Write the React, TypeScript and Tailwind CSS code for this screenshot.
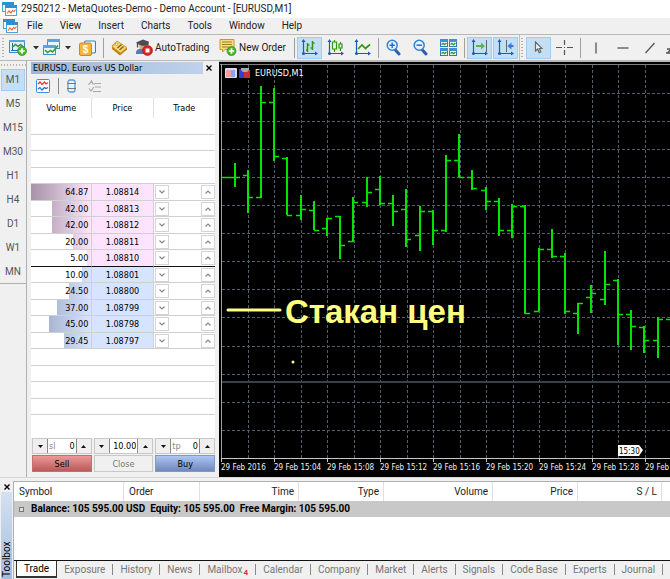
import { useState } from "react"
import type { ReactNode } from "react"

interface BookRow {
  volume: number
  price: string
  side: "ask" | "bid"
}

const book: BookRow[] = [
  { volume: 64.87, price: "1.08814", side: "ask" },
  { volume: 42, price: "1.08813", side: "ask" },
  { volume: 42, price: "1.08812", side: "ask" },
  { volume: 20, price: "1.08811", side: "ask" },
  { volume: 5, price: "1.08810", side: "ask" },
  { volume: 10, price: "1.08801", side: "bid" },
  { volume: 24.5, price: "1.08800", side: "bid" },
  { volume: 37, price: "1.08799", side: "bid" },
  { volume: 45, price: "1.08798", side: "bid" },
  { volume: 29.45, price: "1.08797", side: "bid" },
]
const maxVolume = 64.87

// open, high, low, close as pixel rows of the chart
const bars = [
  [116, 102, 126, 116],
  [114, 109, 152, 136],
  [136, 25, 137, 41],
  [41, 27, 100, 95],
  [97, 96, 154, 154],
  [154, 134, 159, 148],
  [149, 140, 169, 169],
  [167, 157, 175, 157],
  [155, 155, 198, 184],
  [180, 136, 181, 141],
  [141, 116, 146, 131],
  [128, 115, 144, 142],
  [142, 134, 165, 150],
  [148, 128, 186, 178],
  [174, 145, 190, 150],
  [150, 149, 184, 169],
  [169, 94, 171, 99],
  [99, 73, 116, 116],
  [116, 109, 129, 127],
  [129, 126, 149, 140],
  [140, 137, 175, 169],
  [169, 143, 177, 145],
  [145, 144, 253, 252],
  [250, 187, 250, 188],
  [188, 168, 197, 195],
  [195, 192, 253, 250],
  [252, 242, 273, 242],
  [236, 224, 252, 232],
  [238, 190, 244, 223],
  [219, 218, 284, 253],
  [253, 249, 289, 265],
  [266, 265, 292, 279],
  [279, 256, 297, 258],
  [258, 250, 270, 260],
]

const menus = ["File", "View", "Insert", "Charts", "Tools", "Window", "Help"]
const frames = ["M1", "M5", "M15", "M30", "H1", "H4", "D1", "W1", "MN"]
const tabs = [
  "Trade", "Exposure", "History", "News", "Mailbox", "Calendar", "Company",
  "Market", "Alerts", "Signals", "Code Base", "Experts", "Journal",
]
const timeLabels = ["29 Feb 2016", "29 Feb 15:04", "29 Feb 15:08", "29 Feb 15:12", "29 Feb 15:16", "29 Feb 15:20", "29 Feb 15:24", "29 Feb 15:28", "29 Feb 15:32"]

function AppIcon() {
  return (
    <svg width="15" height="14" viewBox="0 0 15 14" aria-hidden="true">
      <rect x="0.5" y="0.5" width="11" height="9" fill="#fff" stroke="#4ba3d8" />
      <rect x="0" y="0" width="12" height="3" fill="#2f8fcf" />
      <rect x="3.5" y="3.5" width="11" height="10" fill="#fff" stroke="#4ba3d8" />
      <rect x="3" y="3" width="12" height="3" fill="#2f8fcf" />
      <path d="M5 11.5l2-2.5 2 2 1.500-2.500 1.500 1 1.500-2" fill="none" stroke="#f26a3c" strokeWidth="1.200" />
    </svg>
  )
}

function NewChartIcon() {
  return (
    <svg width="18" height="17" viewBox="0 0 18 17">
      <rect x="0.500" y="1.500" width="15" height="12" fill="#dff0fb" stroke="#3f8dc6" />
      <path d="M0 1h16v2H0z" fill="#5aa5dc" />
      <path d="M3.500 4v8M2 11.500h12" stroke="#2c62b5" fill="none" />
      <path d="M3.500 8l3-2.500 2.500 2 2.500-2 3 2.500" stroke="#2e9a2e" strokeWidth="1.500" fill="none" />
      <circle cx="13" cy="12" r="4.500" fill="#4cb52c" stroke="#2f8a1c" strokeWidth="0.700" />
      <path d="M13 9.300v5.400M10.300 12h5.400" stroke="#fff" strokeWidth="1.700" />
    </svg>
  )
}

function ProfilesIcon() {
  return (
    <svg width="18" height="17" viewBox="0 0 18 17">
      <rect x="4.500" y="0.500" width="12" height="9" fill="#eaf5fc" stroke="#3f8dc6" />
      <path d="M4 0h13v3H4z" fill="#5aa5dc" />
      <rect x="0.500" y="6.500" width="12" height="9" fill="#eaf5fc" stroke="#3f8dc6" />
      <path d="M0 6h13v3H0z" fill="#5aa5dc" />
      <path d="M2 11l2.500 2.500 3-2 2 1.500 5.500-6.500" fill="none" stroke="#2e9a2e" strokeWidth="1.500" />
    </svg>
  )
}

function SymbolsIcon() {
  return (
    <svg width="17" height="16" viewBox="0 0 17 16">
      <rect x="5.500" y="1" width="11" height="12" rx="1.500" fill="#f4f9fe" stroke="#3b82c8" strokeWidth="1.200" />
      <rect x="0.500" y="3" width="12" height="12.500" rx="1.500" fill="#f2b632" stroke="#c98b12" />
      <text x="6.500" y="13" textAnchor="middle" fontSize="10" className="font-['Liberation_Sans'] font-bold" fill="#fff">$</text>
    </svg>
  )
}

function TagIcon() {
  return (
    <svg width="17" height="16" viewBox="0 0 17 16">
      <path d="M1 5.500L6 1l10 6.500v2L9 15.500 1 9z" fill="#b9820f" />
      <path d="M1 6.500L6 1l10 6.500L9.500 13z" fill="#f6d878" stroke="#c8962a" strokeWidth="0.700" />
      <path d="M6.500 8l4-3.500M8.500 10l4-3.500" stroke="#8a5f10" strokeWidth="1.300" />
      <circle cx="5.500" cy="4.300" r="1.200" fill="#fff" stroke="#a87410" strokeWidth="0.600" />
    </svg>
  )
}

function AutoIcon() {
  return (
    <svg width="18" height="17" viewBox="0 0 18 17">
      <path d="M1 14c0-3.500 3-4.500 6-4.500s5 1.500 5 5.500H1z" fill="#4c7fc0" />
      <circle cx="7.500" cy="7" r="3.200" fill="#d8a878" />
      <path d="M1 3.500L8 .5l6 2.300-.5 3.200L8 7 3.500 5.500z" fill="#4a4f56" />
      <path d="M2.500 4v4.500" stroke="#4a4f56" strokeWidth="1.300" />
      <circle cx="12.500" cy="11.500" r="5" fill="#d9261c" stroke="#a3120c" strokeWidth="0.600" />
      <rect x="10.500" y="9.500" width="4" height="4" fill="#fff" />
    </svg>
  )
}

function NewOrderIcon() {
  return (
    <svg width="18" height="17" viewBox="0 0 18 17">
      <path d="M1 .5h14v10H6L3.500 13v-2.500H1z" fill="#f6dc80" stroke="#c79a28" />
      <path d="M3 3h10M3 5.500h10M3 8h7" stroke="#a57d1c" />
      <circle cx="12.500" cy="12" r="4.500" fill="#4cb52c" stroke="#2f8a1c" strokeWidth="0.700" />
      <path d="M12.500 9.300v5.400M9.800 12h5.400" stroke="#fff" strokeWidth="1.700" />
    </svg>
  )
}

// blue axes that the chart-mode icons share
function Axes({ children }: { children: ReactNode }) {
  return (
    <svg width="17" height="17" viewBox="0 0 17 17">
      <path d="M2.500 2v12.500M1 14.500h14" stroke="#2458b8" strokeWidth="1.200" fill="none" />
      <path d="M2.500 0L4.500 3h-4zM17 14.500l-3-2v4z" fill="#2458b8" />
      <circle cx="2.500" cy="14.500" r="1.500" fill="#2458b8" />
      {children}
    </svg>
  )
}

function ZoomIcon({ plus }: { plus?: boolean }) {
  return (
    <svg width="15" height="17" viewBox="0 0 15 17">
      <path d="M8.500 10l4.500 5" stroke="#2d5fae" strokeWidth="3" strokeLinecap="round" />
      <circle cx="6.200" cy="6.200" r="5" fill="#e3f2fd" stroke="#2f86d0" strokeWidth="1.500" />
      <path d={plus ? "M6.200 3.500v5.400M3.500 6.200h5.400" : "M3.500 6.200h5.400"} stroke="#2f6fc0" strokeWidth="1.500" />
    </svg>
  )
}

function TileIcon() {
  return (
    <svg width="17" height="17" viewBox="0 0 17 17">
      {[[0, 0], [9, 0], [0, 9], [9, 9]].map(([x, y]) => (
        <g key={`${x}-${y}`}>
          <rect x={x + 0.5} y={y + 0.5} width="7" height="7" fill="#fff" stroke="#2f78c0" />
          <path d={`M${x} ${y + 1.5}h8`} stroke="#3f8fd8" strokeWidth="3" />
          <path d={`M${x + 1.5} ${y + 5.5}l1.500-1 1.500 1 2-1.500`} stroke="#2e9a2e" strokeWidth="1.500" fill="none" />
        </g>
      ))}
    </svg>
  )
}

function Tool({ label, width, active, children }: { label: string; width: string; active?: boolean; children: ReactNode }) {
  return (
    <button
      aria-label={label}
      className={`flex h-[22px] shrink-0 items-center justify-center ${width} ${
        active ? "border border-[#a3cdf0] bg-[#c3dff5]" : ""
      }`}
    >
      {children}
    </button>
  )
}

function Sep() {
  return <div className="mx-[2px] h-5 w-px shrink-0 bg-[#a0a0a0]" />
}

function Caret({ label }: { label: string }) {
  return (
    <Tool label={label} width="w-[10px]">
      <svg width="6" height="4" viewBox="0 0 6 4"><path d="M0 0h6L3 3.500z" fill="#333" /></svg>
    </Tool>
  )
}

function Grip() {
  return (
    <svg width="4" height="22" className="shrink-0">
      <path d="M2 1v21" stroke="#b4b4b4" strokeWidth="2" strokeDasharray="1 2" />
    </svg>
  )
}

function Toolbar() {
  return (
    <div className="flex h-[27px] items-center overflow-hidden border-y border-[#b8b8b8] bg-[#f0f0f0] pl-[1px]">
      <Grip />
      <Tool label="New chart" width="w-[26px]"><NewChartIcon /></Tool>
      <Caret label="Chart list" />
      <Tool label="Profiles" width="w-[22px]"><ProfilesIcon /></Tool>
      <Caret label="Profile list" />
      <Tool label="Symbols" width="w-[28px]"><SymbolsIcon /></Tool>
      <Sep />
      <Tool label="Market" width="w-[26px]"><TagIcon /></Tool>
      <button className="flex w-[84px] shrink-0 items-center gap-[2px] pl-[3px] whitespace-nowrap"><AutoIcon />AutoTrading</button>
      <button className="flex w-[76px] shrink-0 items-center gap-[2px] pl-[3px] whitespace-nowrap"><NewOrderIcon />New Order</button>
      <Sep />
      <Tool label="Bar chart" width="w-[25px]" active>
        <Axes><path d="M6.500 4v9M5 11h1.500M6.500 6h2M11.500 2v9M9.500 9h2M11.500 4h2" stroke="#2e9a10" strokeWidth="1.500" fill="none" /></Axes>
      </Tool>
      <Tool label="Candlesticks" width="w-[26px]">
        <Axes><path d="M7.500 1v2M7.500 10v3M5.500 3h4v7h-4zM13.500 3v2M13.500 9v3M12 5h3v4h-3z" stroke="#2e9a10" strokeWidth="1.200" fill="none" /></Axes>
      </Tool>
      <Tool label="Line chart" width="w-[28px]">
        <Axes><path d="M4 10l4-4 3.500 3.500L16 5.500" stroke="#2e9a10" strokeWidth="1.700" fill="none" /></Axes>
      </Tool>
      <Sep />
      <Tool label="Zoom in" width="w-[25px]"><ZoomIcon plus /></Tool>
      <Tool label="Zoom out" width="w-[28px]"><ZoomIcon /></Tool>
      <Tool label="Tile windows" width="w-[28px]"><TileIcon /></Tool>
      <Sep />
      <Tool label="Auto scroll" width="w-[25px]" active>
        <Axes><path d="M15.500 1v12" stroke="#666" /><path d="M5 6h5V3.500L14 7l-4 3.500V8H5z" fill="#5cb548" /></Axes>
      </Tool>
      <div className="w-px shrink-0" />
      <Tool label="Chart shift" width="w-[25px]" active>
        <Axes><path d="M9.500 1v12" stroke="#666" /><path d="M16.500 6h-2V3.500L10.500 7l4 3.500V8h2z" fill="#3f78d0" /></Axes>
      </Tool>
      <div className="ml-px h-full w-px shrink-0 bg-[#c0c0c0]" />
      <Grip />
      <div className="w-[2px] shrink-0" />
      <Tool label="Cursor" width="w-[25px]" active>
        <svg width="9" height="13" viewBox="0 0 9 13"><path d="M1.500 1v9l2.200-2 1.500 3.700 1.600-.7-1.500-3.500h2.700z" fill="#f4f4f4" stroke="#666" strokeWidth="1.200" /></svg>
      </Tool>
      <Tool label="Crosshair" width="w-[27px]">
        <svg width="17" height="17" viewBox="0 0 17 17"><path d="M8.500 1v5M8.500 11v5M0 8.500h6M11 8.500h6M8 8.500h1" stroke="#555" strokeWidth="1.200" /></svg>
      </Tool>
      <Sep />
      <Tool label="Vertical line" width="w-[26px]">
        <svg width="12" height="12" viewBox="0 0 12 12"><path d="M6 .5v11" stroke="#555" strokeWidth="1.300" /></svg>
      </Tool>
      <Tool label="Horizontal line" width="w-[27px]">
        <svg width="12" height="12" viewBox="0 0 12 12"><path d="M.5 6h11" stroke="#555" strokeWidth="1.300" /></svg>
      </Tool>
      <Tool label="Trend line" width="w-[27px]">
        <svg width="12" height="12" viewBox="0 0 12 12"><path d="M1.500 11l9-10" stroke="#555" strokeWidth="1.300" /></svg>
      </Tool>
      <Tool label="Channel" width="w-[20px]">
        <svg width="14" height="12" viewBox="0 0 14 12"><path d="M0 11h4M1 7h4M1.500 11l9-10" stroke="#555" strokeWidth="1.300" /></svg>
      </Tool>
    </div>
  )
}

function Timeframes() {
  const [frame, setFrame] = useState("M1")
  return (
    <div className="w-[27px] shrink-0 border-r border-[#b0b0b0]">
      <div className="flex flex-col gap-[2px] border-b border-[#b0b0b0] px-px pt-[2px]">
        <svg width="25" height="4" className="shrink-0"><path d="M0 2h25" stroke="#b4b4b4" strokeWidth="2" strokeDasharray="1 2" /></svg>
        {frames.map((f) => (
          <button
            key={f}
            onClick={() => setFrame(f)}
            className={`h-[22px] text-[#555] ${f === frame ? "border border-[#a3cdf0] bg-[#c3dff5]" : ""}`}
          >
            {f}
          </button>
        ))}
      </div>
    </div>
  )
}

function Chevron({ up }: { up?: boolean }) {
  return (
    <button aria-label={up ? "Sell at this price" : "Buy at this price"} className="flex h-[14px] w-[14px] items-center justify-center border border-[#d4d4d4] bg-white">
      <svg width="6" height="4" viewBox="0 0 6 4"><path d={up ? "M.5 3.500L3 1l2.500 2.500" : "M.5.5L3 3 5.500.5"} fill="none" stroke="#888" strokeWidth="1.200" /></svg>
    </button>
  )
}

function BlankRow() {
  return (
    <tr className="odd:h-[17px] even:h-[16px]">
      <td colSpan={3} className="border-b border-[#d0d0d0] p-0" />
    </tr>
  )
}

function Spinner({ label, value, showLabel }: { label: string; value: string; showLabel?: boolean }) {
  return (
    <div className="flex h-4 min-w-0 flex-1 border border-[#c8c8c8] bg-[#efefef]">
      <button aria-label={`Decrease ${label}`} className="flex w-[14px] items-center justify-center">
        <svg width="5" height="3" viewBox="0 0 5 3"><path d="M0 0h5L2.500 3z" fill="#111" /></svg>
      </button>
      <label className="flex min-w-0 flex-1 items-center border-x border-[#888] bg-white px-px">
        {showLabel && <span className="text-[#888]">{label}</span>}
        <input aria-label={label} defaultValue={value} className="w-full min-w-0 bg-transparent text-right outline-none" />
      </label>
      <button aria-label={`Increase ${label}`} className="flex w-[14px] items-center justify-center">
        <svg width="5" height="3" viewBox="0 0 5 3"><path d="M0 3h5L2.500 0z" fill="#111" /></svg>
      </button>
    </div>
  )
}

function DepthOfMarket() {
  return (
    <section className="flex w-[192px] shrink-0 flex-col pr-[4px] pb-[5px] pl-[4px] font-['DejaVu_Sans_Condensed','DejaVu_Sans',sans-serif] text-[9px] leading-3 text-black">
      <header className="flex h-[13px] items-center">
        <h2 className="flex-1 bg-linear-to-r from-[#9db5d6] to-[#bfd2ea] pl-[2px] whitespace-nowrap">EURUSD, Euro vs US Dollar</h2>
        <button aria-label="Close panel" className="flex w-[12px] justify-center">
          <svg width="6" height="6" viewBox="0 0 6 6"><path d="M.5.5l5 5M5.500.5l-5 5" stroke="#000" strokeWidth="1.400" /></svg>
        </button>
      </header>
      <div className="flex h-6 items-center gap-2 pl-[5px]">
        <button aria-label="Tick chart">
          <svg width="14" height="14" viewBox="0 0 14 14">
            <rect x="0.500" y="0.500" width="13" height="13" rx="1" fill="#fff" stroke="#3b8ede" />
            <path d="M2 5l2-2 2 2.500 2.500-2.500L10 5l2-1.500" fill="none" stroke="#e03030" strokeWidth="1.200" />
            <path d="M2 10l2-1.500L6 11l2.500-2.500 1.500 1 2-1" fill="none" stroke="#2f60c8" strokeWidth="1.200" />
          </svg>
        </button>
        <div className="h-4 w-px bg-[#888]" />
        <button aria-label="Spread">
          <svg width="9" height="14" viewBox="0 0 9 14">
            <rect x="1" y="1" width="7" height="12" rx="2" fill="#e8f3fc" stroke="#5b9bd8" strokeWidth="1.300" />
            <path d="M0 4.500h9M0 9.500h9" stroke="#777" />
          </svg>
        </button>
        <button aria-label="Advanced mode" className="ml-1">
          <svg width="14" height="14" viewBox="0 0 14 14">
            <path d="M0 5h1.500L3.500 2l1.500 3h2M1 9.500l2 2.500 3-4M7 4.500h6M7 8h6M5 12.500h8" fill="none" stroke="#a8a8a8" strokeWidth="1.200" />
          </svg>
        </button>
      </div>
      <div className="flex flex-1 flex-col bg-white">
        <table className="w-full table-fixed border-separate border-spacing-0">
          <thead>
            <tr className="h-5">
              <th className="border-r border-[#e0e0e0] p-0 font-normal">Volume</th>
              <th className="border-r border-[#e0e0e0] p-0 font-normal">Price</th>
              <th className="p-0 font-normal">Trade</th>
            </tr>
          </thead>
          <tbody>
            <BlankRow />
            <BlankRow />
            <BlankRow />
            <BlankRow />
            {book.map((row, i) => {
              const ask = row.side === "ask"
              const line = ask && book[i + 1].side === "bid" ? "border-b-[#111]" : "border-b-[#d0d0d0]"
              return (
                <tr key={row.price} className="odd:h-[17px] even:h-[16px]">
                  <td className={`relative border-r border-b border-r-[#d0d0d0] p-0 pr-[3px] text-right ${line}`}>
                    <div
                      className={`absolute inset-y-0 right-0 bg-[length:60px_100%] bg-right bg-no-repeat ${
                        ask ? "bg-linear-to-r from-[#a693a6] to-[#fde6fd]" : "bg-linear-to-r from-[#93a2bd] to-[#d8e5ff]"
                      }`}
                      style={{ width: `${(row.volume / maxVolume) * 100}%` }}
                    />
                    <span className="relative">{row.volume.toFixed(2)}</span>
                  </td>
                  <td className={`border-r border-b border-r-[#d0d0d0] p-0 text-center ${line} ${ask ? "bg-[#fde3fd]" : "bg-[#d6e4ff]"}`}>
                    {row.price}
                  </td>
                  <td className={`border-b p-0 pl-px ${line}`}>
                    <div className="flex justify-between"><Chevron /><Chevron up /></div>
                  </td>
                </tr>
              )
            })}
            <BlankRow />
            <BlankRow />
            <BlankRow />
            <BlankRow />
          </tbody>
        </table>
      </div>
      <div className="flex gap-[2px] pl-px">
        <Spinner label="sl" value="0" showLabel />
        <Spinner label="volume" value="10.00" />
        <Spinner label="tp" value="0" showLabel />
      </div>
      <div className="mt-px flex gap-[2px] pl-px">
        <button className="h-[17px] flex-1 border border-[#c07070] bg-linear-to-b from-[#ef9898] to-[#b95a5a]">Sell</button>
        <button className="h-[17px] flex-1 border border-[#c8c8c8] bg-[#f0f0f0] text-[#777]">Close</button>
        <button className="h-[17px] flex-1 border border-[#8098c8] bg-linear-to-b from-[#adc6f5] to-[#7088ba]">Buy</button>
      </div>
    </section>
  )
}

function Chart() {
  return (
    <section className="min-w-0 flex-1 bg-black">
      <svg className="block h-full w-full font-['DejaVu_Sans_Condensed','DejaVu_Sans',sans-serif]" role="img" aria-label="EURUSD,M1">
        <rect x="0" y="0" width="100%" height="1" fill="#b8b8b8" />
        <rect x="1" y="3" width="100%" height="1" fill="#808080" />
        <rect x="2" y="3" width="1" height="397" fill="#a0a0a0" />
        <g stroke="#52606d" strokeDasharray="3 2" shapeRendering="crispEdges">
          {Array.from({ length: 80 }, (_, i) => (
            <line key={i} x1={29.5 + i * 26.45} x2={29.5 + i * 26.45} y1="4" y2="397" />
          ))}
          {Array.from({ length: 13 }, (_, i) => (
            <line key={i} x1="3" x2="100%" y1={32 + i * 28.12} y2={32 + i * 28.12} />
          ))}
        </g>
        <rect x="3" y="320" width="100%" height="2" fill="#36424d" />
        <g stroke="#00e400" fill="none">
          <path d="M3 116.500h8" strokeWidth="1.500" />
          {bars.map(([open, high, low, close], i) => {
            const x = Math.round(15.5 + i * 13.22)
            return (
              <g key={i}>
                <path d={`M${x} ${high}V${low}`} strokeWidth="2" />
                <path d={`M${x - 5} ${open + 0.5}h5M${x} ${close + 0.5}h5`} strokeWidth="1.500" />
              </g>
            )
          })}
        </g>

        {/* Chart caption */}
        <rect x="6" y="7" width="12" height="10" rx="1" fill="#d8d8ee" />
        <rect x="7" y="9" width="5" height="7" fill="#f0a0a0" />
        <rect x="12" y="9" width="4" height="7" fill="#8ea0f0" />
        <rect x="20" y="8" width="6" height="9" fill="#3040d0" />
        <rect x="25" y="9" width="6" height="8" fill="#c83030" />
        <path d="M22 7h8v2l-2 2h-4l-2-2z" fill="#a8a8a8" />
        <text x="36" y="15" fontSize="9" fill="#fff">EURUSD,M1</text>

        {/* Annotation */}
        <path d="M9 249h52" stroke="#ffff80" strokeWidth="3" strokeLinecap="round" />
        <circle cx="74" cy="301" r="1.500" fill="#ffff80" />
        <text x="66" y="262" fontSize="33" fill="#ffff80" className="font-['Liberation_Sans',Arial,sans-serif] font-bold">Стакан цен</text>

        {/* Time axis */}
        <rect x="2" y="397" width="100%" height="1" fill="#c8c8c8" />
        {timeLabels.map((t, i) => (
          <g key={t}>
            <rect x={2 + i * 53} y="397" width="1" height="4" fill="#c8c8c8" />
            <text x={2 + i * 53} y="409" fontSize="8" fill="#eee">{t}</text>
          </g>
        ))}
        <path d="M399 384h21l4 5-4 6h-21z" fill="#fff" />
        <text x="400" y="393" fontSize="8" fill="#000">15:30</text>
      </svg>
    </section>
  )
}

function Toolbox() {
  const [tab, setTab] = useState("Trade")
  const head = "border-r border-[#e0e0e0] py-0 pr-[4px] font-normal"
  return (
    <section className="flex h-[102px] border-t border-[#d8d8d8] pt-[3px]">
      <div className="flex w-[13px] shrink-0 flex-col items-center">
        <button aria-label="Close toolbox" className="flex h-[11px] items-center">
          <svg width="6" height="6" viewBox="0 0 6 6"><path d="M.5.5l5 5M5.500.5l-5 5" stroke="#000" strokeWidth="1.400" /></svg>
        </button>
        <div className="flex w-[11px] flex-1 items-center bg-linear-to-b from-[#a5bddd] to-[#d3e1f2] pt-[2px] text-[10px] leading-[11px] text-black [writing-mode:vertical-rl] rotate-180">Toolbox</div>
      </div>
      <div className="flex min-w-0 flex-1 flex-col border-l border-[#b0b0b0]">
        <div className="h-[80px] overflow-hidden border-t border-b border-t-[#b0b0b0] border-b-[#111] bg-white">
          <table className="w-full table-fixed border-separate border-spacing-0">
            <colgroup>
              <col className="w-[110px]" />
              <col className="w-[76px]" />
              <col className="w-[99px]" />
              <col className="w-[85px]" />
              <col className="w-[109px]" />
              <col className="w-[85px]" />
              <col className="w-[84px]" />
              <col />
            </colgroup>
            <thead>
              <tr className="h-[19px]">
                <th className={`${head} pl-[5px] text-left`}>Symbol</th>
                <th className={`${head} pl-[5px] text-left`}>Order</th>
                <th className={`${head} text-right`}>Time</th>
                <th className={`${head} text-right`}>Type</th>
                <th className={`${head} text-right`}>Volume</th>
                <th className={`${head} text-right`}>Price</th>
                <th className={`${head} text-right`}>S / L</th>
                <th className="p-0" />
              </tr>
            </thead>
            <tbody>
              <tr className="h-4 bg-[#c8c8c8]">
                <td colSpan={8} className="p-0 pl-[5px] font-bold whitespace-pre text-black">
                  <span className="mr-[7px] inline-block h-[5px] w-[5px] border border-[#777] bg-[#ddd] align-middle" />
                  {"Balance: 105 595.00 USD  Equity: 105 595.00  Free Margin: 105 595.00"}
                </td>
              </tr>
            </tbody>
          </table>
        </div>
        <div className="flex overflow-hidden pl-[2px]">
          {tabs.map((t) => (
            <button
              key={t}
              onClick={() => setTab(t)}
              className={`flex h-[17px] shrink-0 items-center whitespace-nowrap ${
                t === tab ? "border-x border-b-2 border-[#333] bg-white px-[7px] text-black" : "pl-[7px] text-[#777]"
              }`}
            >
              {t}
              {t === "Mailbox" && <span className="mt-[7px] ml-px text-[8px] font-bold text-[#e03030]">4</span>}
              {t !== tab && <span className="ml-[7px] h-[11px] w-px bg-[#888]" />}
            </button>
          ))}
        </div>
      </div>
    </section>
  )
}

export default function App() {
  return (
    <div className="flex min-h-screen flex-col bg-[#f0f0f0] font-[Roboto,'Open_Sans',sans-serif] text-[10px] leading-[14px] text-[#222]">
      <header className="flex h-[18px] items-center gap-1 bg-white pl-[2px]">
        <AppIcon />
        <h1>2950212 - MetaQuotes-Demo - Demo Account - [EURUSD,M1]</h1>
      </header>
      <nav className="flex h-4 items-center gap-[9px] pl-[3px]">
        <AppIcon />
        <div className="flex gap-[17px]">
          {menus.map((m) => (
            <button key={m}>{m}</button>
          ))}
        </div>
      </nav>
      <Toolbar />
      <main className="flex min-h-[416px] flex-1">
        <Timeframes />
        <DepthOfMarket />
        <Chart />
      </main>
      <Toolbox />
    </div>
  )
}
